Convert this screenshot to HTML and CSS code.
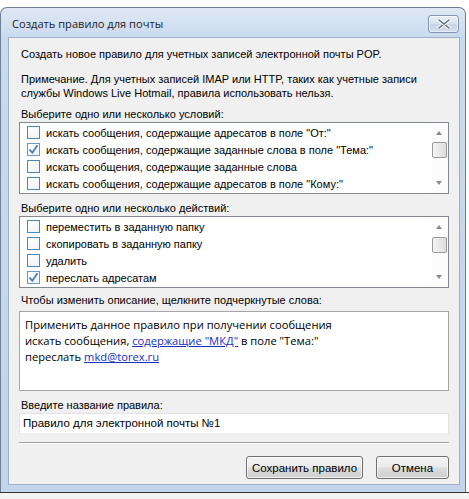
FILE: index.html
```html
<!DOCTYPE html>
<html lang="ru">
<head>
<meta charset="utf-8">
<title>Создать правило для почты</title>
<link rel="stylesheet" href="styles.css">
</head>
<body>
<div class="screen">
  <div class="window">
    <div class="titlebar">
      <span class="title">Создать правило для почты</span>
      <span class="close">
        <svg width="14" height="10" viewBox="0 0 14 10"><path d="M2 1 L12 9 M12 1 L2 9" stroke="#fff" stroke-width="3.4" stroke-linecap="round"/><path d="M2 1 L12 9 M12 1 L2 9" stroke="#5a6a80" stroke-width="1.6" stroke-linecap="round"/></svg>
      </span>
    </div>
    <div class="client">
      <p class="txt intro">Создать новое правило для учетных записей электронной почты POP.</p>
      <p class="txt note">Примечание. Для учетных записей IMAP или HTTP, таких как учетные записи службы Windows Live Hotmail, правила использовать нельзя.</p>
      <p class="txt label">Выберите одно или несколько условий:</p>
      <div class="listbox">
        <ul class="items">
          <li><span class="cb"></span>искать сообщения, содержащие адресатов в поле "От:"</li>
          <li><span class="cb on"><svg width="11" height="11" viewBox="0 0 11 11"><path d="M1.5 5.5 L4.3 8.7 L9.5 1.2" fill="none" stroke="#4d7fb0" stroke-width="1.8"/></svg></span>искать сообщения, содержащие заданные слова в поле "Тема:"</li>
          <li><span class="cb"></span>искать сообщения, содержащие заданные слова</li>
          <li><span class="cb"></span>искать сообщения, содержащие адресатов в поле "Кому:"</li>
        </ul>
        <div class="scroll">
          <span class="arrow up"></span>
          <span class="thumb t1"></span>
          <span class="arrow down"></span>
        </div>
      </div>
      <p class="txt label">Выберите одно или несколько действий:</p>
      <div class="listbox">
        <ul class="items">
          <li><span class="cb"></span>переместить в заданную папку</li>
          <li><span class="cb"></span>скопировать в заданную папку</li>
          <li><span class="cb"></span>удалить</li>
          <li><span class="cb on"><svg width="11" height="11" viewBox="0 0 11 11"><path d="M1.5 5.5 L4.3 8.7 L9.5 1.2" fill="none" stroke="#4d7fb0" stroke-width="1.8"/></svg></span>переслать адресатам</li>
        </ul>
        <div class="scroll">
          <span class="arrow up"></span>
          <span class="thumb t2"></span>
          <span class="arrow down"></span>
        </div>
      </div>
      <p class="txt label3">Чтобы изменить описание, щелкните подчеркнутые слова:</p>
      <div class="desc">
        <div>Применить данное правило при получении сообщения</div>
        <div>искать сообщения, <a class="lnk">содержащие "МКД"</a> в поле "Тема:"</div>
        <div>переслать <a class="lnk">mkd@torex.ru</a></div>
      </div>
      <p class="txt label">Введите название правила:</p>
      <div class="input">Правило для электронной почты №1</div>
      <div class="sep"></div>
      <div class="buttons">
        <span class="btn save">Сохранить правило</span>
        <span class="btn cancel">Отмена</span>
      </div>
    </div>
  </div>
  <div class="below"></div>
</div>
</body>
</html>
```
FILE: styles.css
```css
* { box-sizing: border-box; }
html, body { margin: 0; padding: 0; }
body {
  background: #ffffff;
  width: 469px;
  height: 499px;
  overflow: hidden;
  font-family: "Liberation Sans", Arial, sans-serif;
  font-size: 11px;
  color: #000;
}
.screen {
  padding-top: 7px;
  width: 469px;
}
.window {
  width: 466px;
  height: 485px;
  border: 1px solid #6f7f95;
  border-bottom: none;
  border-radius: 7px 7px 0 0;
  background: linear-gradient(180deg, #dfe9f5 0px, #c9daee 30px, #c3d5eb 100%);
  display: flex;
  flex-direction: column;
  padding: 0 5px 7px 7px;
}
.titlebar {
  height: 29px;
  display: flex;
  align-items: center;
  justify-content: space-between;
  padding-left: 4px;
}
.title {
  font-family: "Open Sans", "Noto Sans", sans-serif;
  font-size: 11.1px;
  color: #1e1e1e;
  margin-top: 2px;
}
.close {
  width: 31px;
  height: 18px;
  margin-right: 1px;
  margin-top: 2px;
  border: 1px solid #8596ae;
  border-radius: 3px;
  background: linear-gradient(180deg, #e9eff7 0%, #d5e0ee 50%, #c6d4e6 51%, #d0dcec 100%);
  display: flex;
  align-items: center;
  justify-content: center;
  box-shadow: inset 0 0 0 1px rgba(255,255,255,0.5);
}
.client {
  flex: 1;
  background: #f0f0f0;
  border: 1px solid #a0b0c6;
  padding: 9px 10px 0 10px;
  display: flex;
  flex-direction: column;
}
.txt {
  margin: 0;
  line-height: 14px;
  padding-left: 2px;
}
.note { margin-top: 11px; padding-right: 20px; }
.label { margin-top: 7px; margin-bottom: 1px; }
.label3 { margin-top: 5px; margin-bottom: 4px; }
.listbox {
  height: 72px;
  border: 1px solid #828790;
  background: #fff;
  display: flex;
}
.items {
  list-style: none;
  margin: 0;
  padding: 1px 0 0 7px;
  flex: 1;
}
.items li {
  height: 17px;
  display: flex;
  align-items: center;
  white-space: nowrap;
}
.cb {
  width: 13px;
  height: 13px;
  border: 1px solid #4a88b8;
  background: linear-gradient(135deg, #ffffff 0%, #eef3f8 100%);
  margin-right: 6px;
  display: flex;
  align-items: center;
  justify-content: center;
  flex: none;
}
.cb.on { border-color: #6e98bf; }
.scroll {
  width: 17px;
  position: relative;
  background: #fcfcfc;
}
.arrow {
  position: absolute;
  left: 5px;
  width: 0;
  height: 0;
  border-left: 3.5px solid transparent;
  border-right: 3.5px solid transparent;
}
.arrow.up { top: 8px; border-bottom: 4px solid #8b8b8b; }
.arrow.down { bottom: 8px; border-top: 4px solid #8b8b8b; }
.thumb {
  position: absolute;
  left: 1px;
  width: 15px;
  height: 16px;
  border: 1px solid #9a9a9a;
  border-radius: 2px;
  background: linear-gradient(90deg, #f4f4f4 0%, #e9e9e9 50%, #dcdcdc 100%);
}
.thumb.t1 { top: 19px; }
.thumb.t2 { top: 20px; }
.desc {
  height: 80px;
  border: 1px solid #a5a5a5;
  background: #fff;
  padding: 5px 5px 0 5px;
  font-family: "Open Sans", "Noto Sans", sans-serif;
  font-size: 11.2px;
  line-height: 16px;
  white-space: nowrap;
}
.lnk {
  color: #1a2fc0;
  text-decoration: underline;
}
.input {
  height: 21px;
  border: 1px solid #e3e3e3;
  border-bottom-color: #ececec;
  background: #fff;
  padding: 0 3px;
  line-height: 19px;
  font-size: 11.5px;
}
.sep {
  margin-top: 8px;
  height: 2px;
  border-top: 1px solid #a0a0a0;
  border-bottom: 1px solid #ffffff;
}
.buttons {
  display: flex;
  justify-content: flex-end;
  gap: 13px;
  margin-top: 12px;
}
.btn {
  height: 23px;
  border: 1px solid #707070;
  border-radius: 3px;
  background: linear-gradient(180deg, #f2f2f2 0%, #ebebeb 48%, #dddddd 52%, #cfcfcf 100%);
  box-shadow: inset 0 0 0 1px rgba(255,255,255,0.7);
  display: flex;
  align-items: center;
  justify-content: center;
  font-size: 11.5px;
}
.save { width: 117px; }
.cancel { width: 73px; }
.below {
  height: 7px;
  border-top: 1px solid #333;
  background: #f4f4f4;
}
```
